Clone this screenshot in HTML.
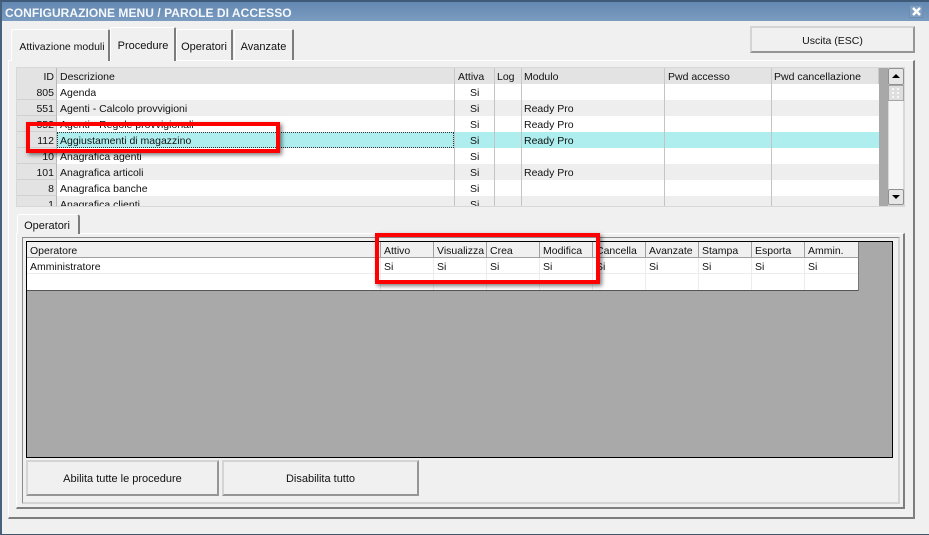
<!DOCTYPE html>
<html><head><meta charset="utf-8">
<style>
html,body{margin:0;padding:0}
body{width:929px;height:535px;overflow:hidden;position:relative;background:#f0f0f0;font:10.5px/16px "Liberation Sans",sans-serif;color:#111}
div{position:absolute;box-sizing:border-box;white-space:nowrap}
svg{position:absolute}
.t{height:16px;line-height:18px;padding-left:3px;overflow:hidden}
.h{background:#e3e3e3;border-right:1px solid #c8c8c8}
.rh{left:17px;width:40px;background:#e3e3e3;border-bottom:1px solid #d0d0d0;border-right:1px solid #b8b8b8;text-align:right;padding-right:2px;height:16px;line-height:18px;overflow:hidden}
.row{left:57px;width:822px;height:16px}
.v{width:1px;background:#c4c4c4}
.h2{top:242px;height:16px;background:#f0f0f0;border-right:1px solid #a0a0a0;border-bottom:1px solid #a0a0a0;padding-left:3px;line-height:18px}
.c{top:258px;height:16px;background:#fff;padding-left:3px;border-right:1px solid #ececec;border-bottom:1px solid #ececec;line-height:19px}
.c2{top:274px;height:16px;background:#fff;border-right:1px solid #ececec}
.btn{background:#f0f0f0;border:2px solid;border-color:#d4d4d4 #969696 #969696 #d4d4d4;text-align:center;font-size:11px}
.tab{background:#f0f0f0;border-top:1px solid #fff;border-left:1px solid #fff;border-right:2px solid #7c7c7c;border-radius:2px 2px 0 0;text-align:center;font-size:11px}
.red{border:4px solid #f00;box-shadow:2px 2px 4px rgba(0,0,0,.5)}
</style></head><body>
<div style="left:0;top:0;width:929px;height:535px;border-left:2px solid #47617d;border-top:2px solid #3e5a78;border-bottom:1px solid #3f566e"></div>
<div style="left:2px;top:2px;width:927px;height:19px;background:linear-gradient(#6388b2,#7b9cc0);color:#f4f8fc;font:bold 12px/23px 'Liberation Sans',sans-serif;padding-left:3px;letter-spacing:.05px">CONFIGURAZIONE MENU / PAROLE DI ACCESSO</div>
<div style="left:909px;top:5px;width:14px;height:13px;background:#7f9fc2;border:1px solid #6c8cb0"></div>
<svg style="left:912px;top:7px" width="9" height="9" viewBox="0 0 9 9"><path d="M1 1L8 8M8 1L1 8" stroke="#fff" stroke-width="2.4" fill="none"/></svg>

<!-- main tab pane -->
<div style="left:8px;top:60px;width:907px;height:459px;border:1px solid;border-color:#fff #7e7e7e #7e7e7e #fff;border-width:1px 2px 2px 1px"></div>
<div class="tab" style="left:11px;top:29px;width:99px;height:32px;line-height:34px;padding-left:4px;font-size:10.5px">Attivazione moduli</div>
<div class="tab" style="left:110px;top:27px;width:66px;height:34px;line-height:37px;padding-left:1px">Procedure</div>
<div class="tab" style="left:176px;top:29px;width:57px;height:31px;line-height:34px">Operatori</div>
<div class="tab" style="left:234px;top:29px;width:60px;height:31px;line-height:34px">Avanzate</div>
<div class="btn" style="left:750px;top:26px;width:165px;height:27px;line-height:27px;font-size:10.5px">Uscita (ESC)</div>

<!-- upper grid -->
<div style="left:16px;top:67px;width:889px;height:140px;background:#f0f0f0;border:1px solid #d8d8d8;overflow:hidden"></div>
<div class="rh" style="top:68px;border-bottom:0;padding-right:2px">ID</div>
<div class="t h" style="left:57px;top:68px;width:398px">Descrizione</div>
<div class="t h" style="left:455px;top:68px;width:40px">Attiva</div>
<div class="t h" style="left:495px;top:68px;width:27px;padding-left:2px">Log</div>
<div class="t h" style="left:522px;top:68px;width:143px;padding-left:2px">Modulo</div>
<div class="t h" style="left:665px;top:68px;width:107px;padding-left:3px">Pwd accesso</div>
<div class="t h" style="left:772px;top:68px;width:107px;padding-left:2px">Pwd cancellazione</div>

<div class="row" style="top:84px;background:#fff"></div>
<div class="row" style="top:100px;background:#eee"></div>
<div class="row" style="top:116px;background:#fff"></div>
<div class="row" style="top:132px;background:#aeeeee"></div>
<div class="row" style="top:148px;background:#fff"></div>
<div class="row" style="top:164px;background:#eee"></div>
<div class="row" style="top:180px;background:#fff"></div>
<div class="row" style="top:196px;height:10px;background:#eee"></div>

<div class="rh" style="top:84px">805</div>
<div class="rh" style="top:100px">551</div>
<div class="rh" style="top:116px">552</div>
<div class="rh" style="top:132px">112</div>
<div class="rh" style="top:148px">10</div>
<div class="rh" style="top:164px">101</div>
<div class="rh" style="top:180px">8</div>
<div class="rh" style="top:196px;height:10px;border-bottom:0">1</div>

<div class="t" style="left:57px;top:84px">Agenda</div>
<div class="t" style="left:57px;top:100px">Agenti - Calcolo provvigioni</div>
<div class="t" style="left:57px;top:116px">Agenti - Regole provvigionali</div>
<div class="t" style="left:57px;top:132px;width:397px;height:16px;border:1px dotted #333;line-height:16px;padding-left:2px">Aggiustamenti di magazzino</div>
<div class="t" style="left:57px;top:148px">Anagrafica agenti</div>
<div class="t" style="left:57px;top:164px">Anagrafica articoli</div>
<div class="t" style="left:57px;top:180px">Anagrafica banche</div>
<div class="t" style="left:57px;top:196px;height:10px">Anagrafica clienti</div>

<div class="v" style="left:454px;top:84px;height:122px"></div>
<div class="v" style="left:494px;top:84px;height:122px"></div>
<div class="v" style="left:521px;top:84px;height:122px"></div>
<div class="v" style="left:664px;top:84px;height:122px"></div>
<div class="v" style="left:771px;top:84px;height:122px"></div>

<div class="t" style="left:467px;top:84px">Si</div>
<div class="t" style="left:467px;top:100px">Si</div>
<div class="t" style="left:467px;top:116px">Si</div>
<div class="t" style="left:467px;top:132px">Si</div>
<div class="t" style="left:467px;top:148px">Si</div>
<div class="t" style="left:467px;top:164px">Si</div>
<div class="t" style="left:467px;top:180px">Si</div>
<div class="t" style="left:467px;top:196px;height:10px">Si</div>
<div class="t" style="left:521px;top:100px">Ready Pro</div>
<div class="t" style="left:521px;top:116px">Ready Pro</div>
<div class="t" style="left:521px;top:132px">Ready Pro</div>
<div class="t" style="left:521px;top:164px">Ready Pro</div>

<!-- scrollbar -->
<div style="left:879px;top:68px;width:9px;height:138px;background:#a8a8a8"></div>
<div style="left:888px;top:68px;width:16px;height:138px;background:#f6f6f6;border:1px solid #d8d8d8"></div>
<div style="left:888px;top:68px;width:16px;height:17px;background:#e6e6e6;border:1px solid #909090;border-radius:2px"></div>
<div style="left:892px;top:74px;width:0;height:0;border:4px solid transparent;border-top:0;border-bottom:4px solid #000"></div>
<div style="left:888px;top:85px;width:16px;height:16px;background:#dedede;border:1px solid #a4a4a4"></div>
<svg style="left:892px;top:88px" width="8" height="10" viewBox="0 0 8 10"><path d="M0 0h2v2H0zM5 0h2v2H5zM0 4h2v2H0zM5 4h2v2H5zM0 8h2v2H0zM5 8h2v2H5z" fill="#f6f6f6"/></svg>
<div style="left:888px;top:189px;width:16px;height:16px;background:#e6e6e6;border:1px solid #909090;border-radius:2px"></div>
<div style="left:892px;top:195px;width:0;height:0;border:4px solid transparent;border-bottom:0;border-top:4px solid #000"></div>

<!-- lower tab control -->
<div style="left:16px;top:233px;width:889px;height:276px;border:1px solid;border-color:#fff #7e7e7e #7e7e7e #fff;border-width:1px 2px 2px 1px"></div>
<div style="left:22px;top:237px;width:878px;height:267px;border:1px solid;border-color:#8a8a8a #d4d4d4 #d4d4d4 #8a8a8a;border-width:1px 2px 2px 1px"></div>
<div class="tab" style="left:17px;top:214px;width:63px;height:20px;line-height:22px;border-radius:3px 3px 0 0;padding-right:2px">Operatori</div>

<!-- lower grid -->
<div style="left:26px;top:241px;width:867px;height:217px;background:#a9a9a9;border:1px solid #000"></div>
<div class="h2" style="left:27px;width:354px">Operatore</div>
<div class="h2" style="left:381px;width:53px">Attivo</div>
<div class="h2" style="left:434px;width:53px">Visualizza</div>
<div class="h2" style="left:487px;width:53px">Crea</div>
<div class="h2" style="left:540px;width:53px">Modifica</div>
<div class="h2" style="left:593px;width:53px">Cancella</div>
<div class="h2" style="left:646px;width:53px">Avanzate</div>
<div class="h2" style="left:699px;width:53px">Stampa</div>
<div class="h2" style="left:752px;width:53px">Esporta</div>
<div class="h2" style="left:805px;width:54px">Ammin.</div>

<div class="c" style="left:27px;width:354px;line-height:18px">Amministratore</div>
<div class="c" style="left:381px;width:53px">Si</div>
<div class="c" style="left:434px;width:53px">Si</div>
<div class="c" style="left:487px;width:53px">Si</div>
<div class="c" style="left:540px;width:53px">Si</div>
<div class="c" style="left:593px;width:53px">Si</div>
<div class="c" style="left:646px;width:53px">Si</div>
<div class="c" style="left:699px;width:53px">Si</div>
<div class="c" style="left:752px;width:53px">Si</div>
<div class="c" style="left:805px;width:54px">Si</div>

<div class="c2" style="left:27px;width:354px"></div>
<div class="c2" style="left:381px;width:53px"></div>
<div class="c2" style="left:434px;width:53px"></div>
<div class="c2" style="left:487px;width:53px"></div>
<div class="c2" style="left:540px;width:53px"></div>
<div class="c2" style="left:593px;width:53px"></div>
<div class="c2" style="left:646px;width:53px"></div>
<div class="c2" style="left:699px;width:53px"></div>
<div class="c2" style="left:752px;width:53px"></div>
<div class="c2" style="left:805px;width:54px"></div>
<div style="left:27px;top:290px;width:832px;height:1px;background:#555"></div>
<div style="left:858px;top:242px;width:1px;height:49px;background:#777"></div>

<div class="btn" style="left:26px;top:460px;width:193px;height:36px;line-height:35px">Abilita tutte le procedure</div>
<div class="btn" style="left:222px;top:460px;width:197px;height:36px;line-height:35px">Disabilita tutto</div>

<!-- red highlight boxes -->
<div class="red" style="left:26px;top:122px;width:254px;height:31px"></div>
<div class="red" style="left:375px;top:233px;width:225px;height:51px"></div>
</body></html>
